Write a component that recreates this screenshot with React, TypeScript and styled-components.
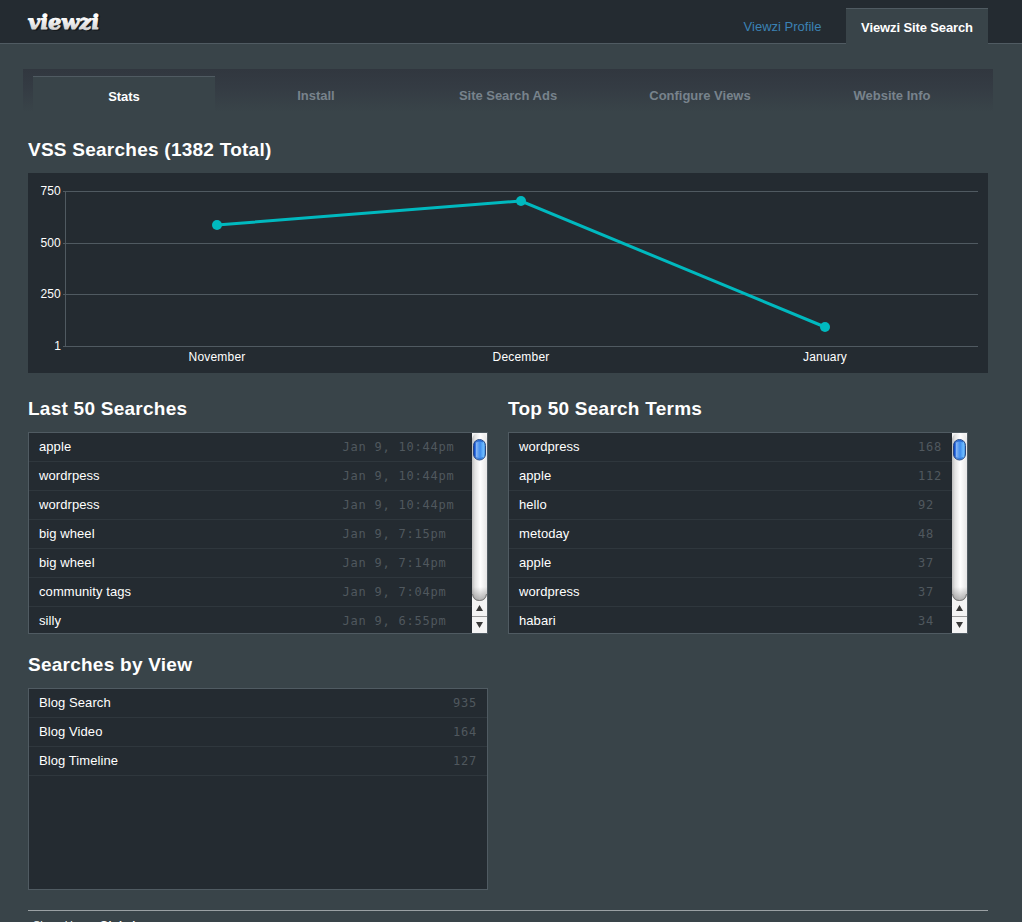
import React from 'react';
import styled, { createGlobalStyle } from 'styled-components';

const GlobalStyle = createGlobalStyle`
  * {
    box-sizing: border-box;
  }

  html,
  body {
    margin: 0;
    height: 922px;
    overflow: hidden;
    background: #394449;
  }

  body {
    font-family: 'Liberation Sans', Arial, sans-serif;
    font-size: 13px;
    color: #ffffff;
  }
`;

const Header = styled.header`
  display: flex;
  align-items: flex-start;
  justify-content: space-between;
  height: 44px;
  padding: 8px 34px 0 24px;
  background: #242b31;
  border-bottom: 1px solid #505b62;
`;

const Logo = styled.svg`
  display: block;
  width: 84px;
  height: 30px;
`;

const AccountNav = styled.nav`
  display: flex;
`;

const AccountLink = styled.a<{ $active?: boolean }>`
  width: ${({ $active }) => ($active ? '142px' : '127px')};
  height: 36px;
  padding-top: ${({ $active }) => ($active ? '1px' : '0')};
  border-top: 1px solid ${({ $active }) => ($active ? '#505b62' : 'transparent')};
  background: ${({ $active }) => ($active ? '#394449' : 'transparent')};
  color: ${({ $active }) => ($active ? '#ffffff' : '#3b82b4')};
  font-weight: ${({ $active }) => ($active ? 'bold' : 'normal')};
  line-height: 36px;
  letter-spacing: ${({ $active }) => ($active ? '-0.12px' : '0')};
  text-align: center;
`;

const TabBar = styled.nav`
  display: flex;
  width: 970px;
  height: 43px;
  margin: 25px 0 0 23px;
  padding: 7px 0 0 10px;
  background: linear-gradient(#31373f, #343b43 40%, #394449);
`;

const Tab = styled.a<{ $active?: boolean }>`
  width: 182px;
  margin-right: 10px;
  border-top: 1px solid ${({ $active }) => ($active ? '#505b62' : 'transparent')};
  background: ${({ $active }) => ($active ? '#394449' : 'transparent')};
  color: ${({ $active }) => ($active ? '#ffffff' : '#78838c')};
  font-weight: bold;
  line-height: ${({ $active }) => ($active ? '40px' : '38px')};
  letter-spacing: -0.02px;
  text-align: center;
`;

const Main = styled.main`
  padding: 26px 34px 0 28px;
`;

const Title = styled.h2`
  height: 35px;
  margin: 0;
  font-size: 19px;
  line-height: 24px;
  letter-spacing: 0.25px;
  white-space: nowrap;
`;

const Chart = styled.svg`
  display: block;
  width: 960px;
  height: 200px;
  background: #242b31;

  text {
    fill: #ffffff;
    font-size: 12px;
    letter-spacing: 0.2px;
  }
`;

const Columns = styled.div`
  display: grid;
  grid-template-columns: 460px 460px;
  column-gap: 20px;
  row-gap: 19px;
  margin-top: 24px;
`;

const Panel = styled.div`
  display: flex;
  height: 202px;
  border: 1px solid #505b62;
  background: #242b31;
  overflow: hidden;
`;

const List = styled.ul`
  flex: 1;
  margin: 0;
  padding: 0;
  list-style: none;
`;

const Row = styled.li`
  display: flex;
  justify-content: space-between;
  height: 29px;
  padding: 0 10px;
  border-bottom: 1px solid #2f373d;
  line-height: 28px;
  letter-spacing: 0.08px;
`;

const Value = styled.span<{ $width: number }>`
  width: ${({ $width }) => $width}px;
  color: #50585e;
  font-family: 'DejaVu Sans Mono', monospace;
  font-size: 12px;
  letter-spacing: 0.78px;
  white-space: nowrap;
`;

const ScrollTrack = styled.svg`
  flex: none;
  width: 15px;
  height: 200px;
`;

const Footer = styled.footer`
  margin: 20px 0 0;
  padding: 8px 5px 0;
  width: 960px;
  border-top: 1px solid #9ba1a4;
  font-size: 11px;
  line-height: 13px;

  b {
    letter-spacing: 0.3px;
  }
`;

const tabs = ['Stats', 'Install', 'Site Search Ads', 'Configure Views', 'Website Info'];

const months = [
  { label: 'November', x: 189, y: 52 },
  { label: 'December', x: 493, y: 28 },
  { label: 'January', x: 797, y: 154 },
];

const gridLines = [
  { label: '750', y: 18.5 },
  { label: '500', y: 70.5 },
  { label: '250', y: 121.5 },
  { label: '1', y: 173.5 },
];

const lastSearches = [
  ['apple', 'Jan 9, 10:44pm'],
  ['wordrpess', 'Jan 9, 10:44pm'],
  ['wordrpess', 'Jan 9, 10:44pm'],
  ['big wheel', 'Jan 9, 7:15pm'],
  ['big wheel', 'Jan 9, 7:14pm'],
  ['community tags', 'Jan 9, 7:04pm'],
  ['silly', 'Jan 9, 6:55pm'],
];

const topTerms = [
  ['wordpress', '168'],
  ['apple', '112'],
  ['hello', '92'],
  ['metoday', '48'],
  ['apple', '37'],
  ['wordpress', '37'],
  ['habari', '34'],
];

const views = [
  ['Blog Search', '935'],
  ['Blog Video', '164'],
  ['Blog Timeline', '127'],
];

const Scrollbar: React.FC<{ id: string }> = ({ id }) => (
  <ScrollTrack viewBox="0 0 15 200">
    <defs>
      <linearGradient id={`${id}-track`}>
        <stop offset="0" stopColor="#bdbdbd" />
        <stop offset="0.2" stopColor="#e2e2e2" />
        <stop offset="0.55" stopColor="#ffffff" />
        <stop offset="1" stopColor="#e6e6e6" />
      </linearGradient>
      <linearGradient id={`${id}-thumb`}>
        <stop offset="0" stopColor="#0b3fb5" />
        <stop offset="0.14" stopColor="#1c5cd8" />
        <stop offset="0.24" stopColor="#86b6f5" />
        <stop offset="0.42" stopColor="#5c9cf0" />
        <stop offset="0.55" stopColor="#3d8cf0" />
        <stop offset="0.82" stopColor="#6dbcff" />
        <stop offset="1" stopColor="#4088d8" />
      </linearGradient>
      <linearGradient id={`${id}-end`} x2="0" y2="1">
        <stop offset="0" stopColor="#777777" stopOpacity="0" />
        <stop offset="1" stopColor="#777777" stopOpacity="0.6" />
      </linearGradient>
    </defs>
    <rect width="15" height="200" fill="#f4f4f4" />
    <path d="M0 6Q1 0 7.5 0Q14 0 15 6V161Q14 168 7.5 168Q1 168 0 161Z" fill={`url(#${id}-track)`} />
    <path d="M0 154H15V161Q14 168 7.5 168Q1 168 0 161Z" fill={`url(#${id}-end)`} />
    <path d="M0.5 161Q1.5 167.5 7.5 167.5Q13.5 167.5 14.5 161" fill="none" stroke="#777777" />
    <rect x="1.5" y="6.5" width="12" height="20.5" rx="6" fill={`url(#${id}-thumb)`} stroke="#2c4a80" />
    <path d="M4 9Q7.5 6.5 11 9" fill="none" stroke="#1d57c0" strokeWidth="1.5" opacity="0.7" />
    <path d="M4 24.5Q7.5 27 11 24.5" fill="none" stroke="#2668c8" strokeWidth="1.5" opacity="0.6" />
    <path d="M7.5 172L11 178H4Z" fill="#383838" />
    <path d="M0 183.5H15" stroke="#999999" />
    <path d="M7.5 195L11 189H4Z" fill="#383838" />
  </ScrollTrack>
);

const Rows: React.FC<{ items: string[][]; width: number }> = ({ items, width }) => (
  <List>
    {items.map(([name, value], index) => (
      <Row key={index}>
        <span>{name}</span>
        <Value $width={width}>{value}</Value>
      </Row>
    ))}
  </List>
);

const SearchChart: React.FC = () => (
  <Chart viewBox="0 0 960 200">
    {gridLines.map(({ label, y }) => (
      <g key={label}>
        <path d={`M35 ${y}H950`} stroke="#505a61" />
        <text x="33" y={y + 3.5} textAnchor="end">
          {label}
        </text>
      </g>
    ))}
    <path d="M37.5 18V174" stroke="#505a61" />
    <polyline
      points={months.map(({ x, y }) => `${x},${y}`).join(' ')}
      fill="none"
      stroke="#00b9bf"
      strokeWidth="3"
    />
    {months.map(({ label, x, y }) => (
      <g key={label}>
        <circle cx={x} cy={y} r="5" fill="#00b9bf" />
        <text x={x} y="188" textAnchor="middle">
          {label}
        </text>
      </g>
    ))}
  </Chart>
);

const App: React.FC = () => (
  <>
    <GlobalStyle />
    <Header>
      <Logo viewBox="0 0 84 30">
        <defs>
          <linearGradient id="logo-fill" x2="0" y2="1">
            <stop offset="0.3" stopColor="#ffffff" />
            <stop offset="0.85" stopColor="#d2d2d2" />
          </linearGradient>
        </defs>
        <g
          fontFamily="DejaVu Serif, serif"
          fontSize="20"
          fontWeight="bold"
          fontStyle="italic"
          strokeWidth="1.1"
          strokeLinejoin="round"
          transform="translate(0 20) skewX(4) translate(0 -20)"
        >
          <text x="6" y="22" textLength="71" lengthAdjust="spacingAndGlyphs" fill="#14181b" stroke="#14181b" aria-hidden="true">
            viewzi
          </text>
          <text x="4.5" y="20.8" textLength="71" lengthAdjust="spacingAndGlyphs" fill="url(#logo-fill)" stroke="url(#logo-fill)">
            viewzi
          </text>
        </g>
      </Logo>
      <AccountNav>
        <AccountLink>Viewzi Profile</AccountLink>
        <AccountLink $active>Viewzi Site Search</AccountLink>
      </AccountNav>
    </Header>
    <TabBar>
      {tabs.map((tab, index) => (
        <Tab key={tab} $active={index === 0}>
          {tab}
        </Tab>
      ))}
    </TabBar>
    <Main>
      <Title>VSS Searches (1382 Total)</Title>
      <SearchChart />
      <Columns>
        <section>
          <Title>Last 50 Searches</Title>
          <Panel>
            <Rows items={lastSearches} width={119.5} />
            <Scrollbar id="last" />
          </Panel>
        </section>
        <section>
          <Title>Top 50 Search Terms</Title>
          <Panel>
            <Rows items={topTerms} width={24} />
            <Scrollbar id="top" />
          </Panel>
        </section>
        <section>
          <Title>Searches by View</Title>
          <Panel>
            <Rows items={views} width={24} />
          </Panel>
        </section>
      </Columns>
      <Footer>
        Signed in as: <b>Global</b>
      </Footer>
    </Main>
  </>
);

export default App;
